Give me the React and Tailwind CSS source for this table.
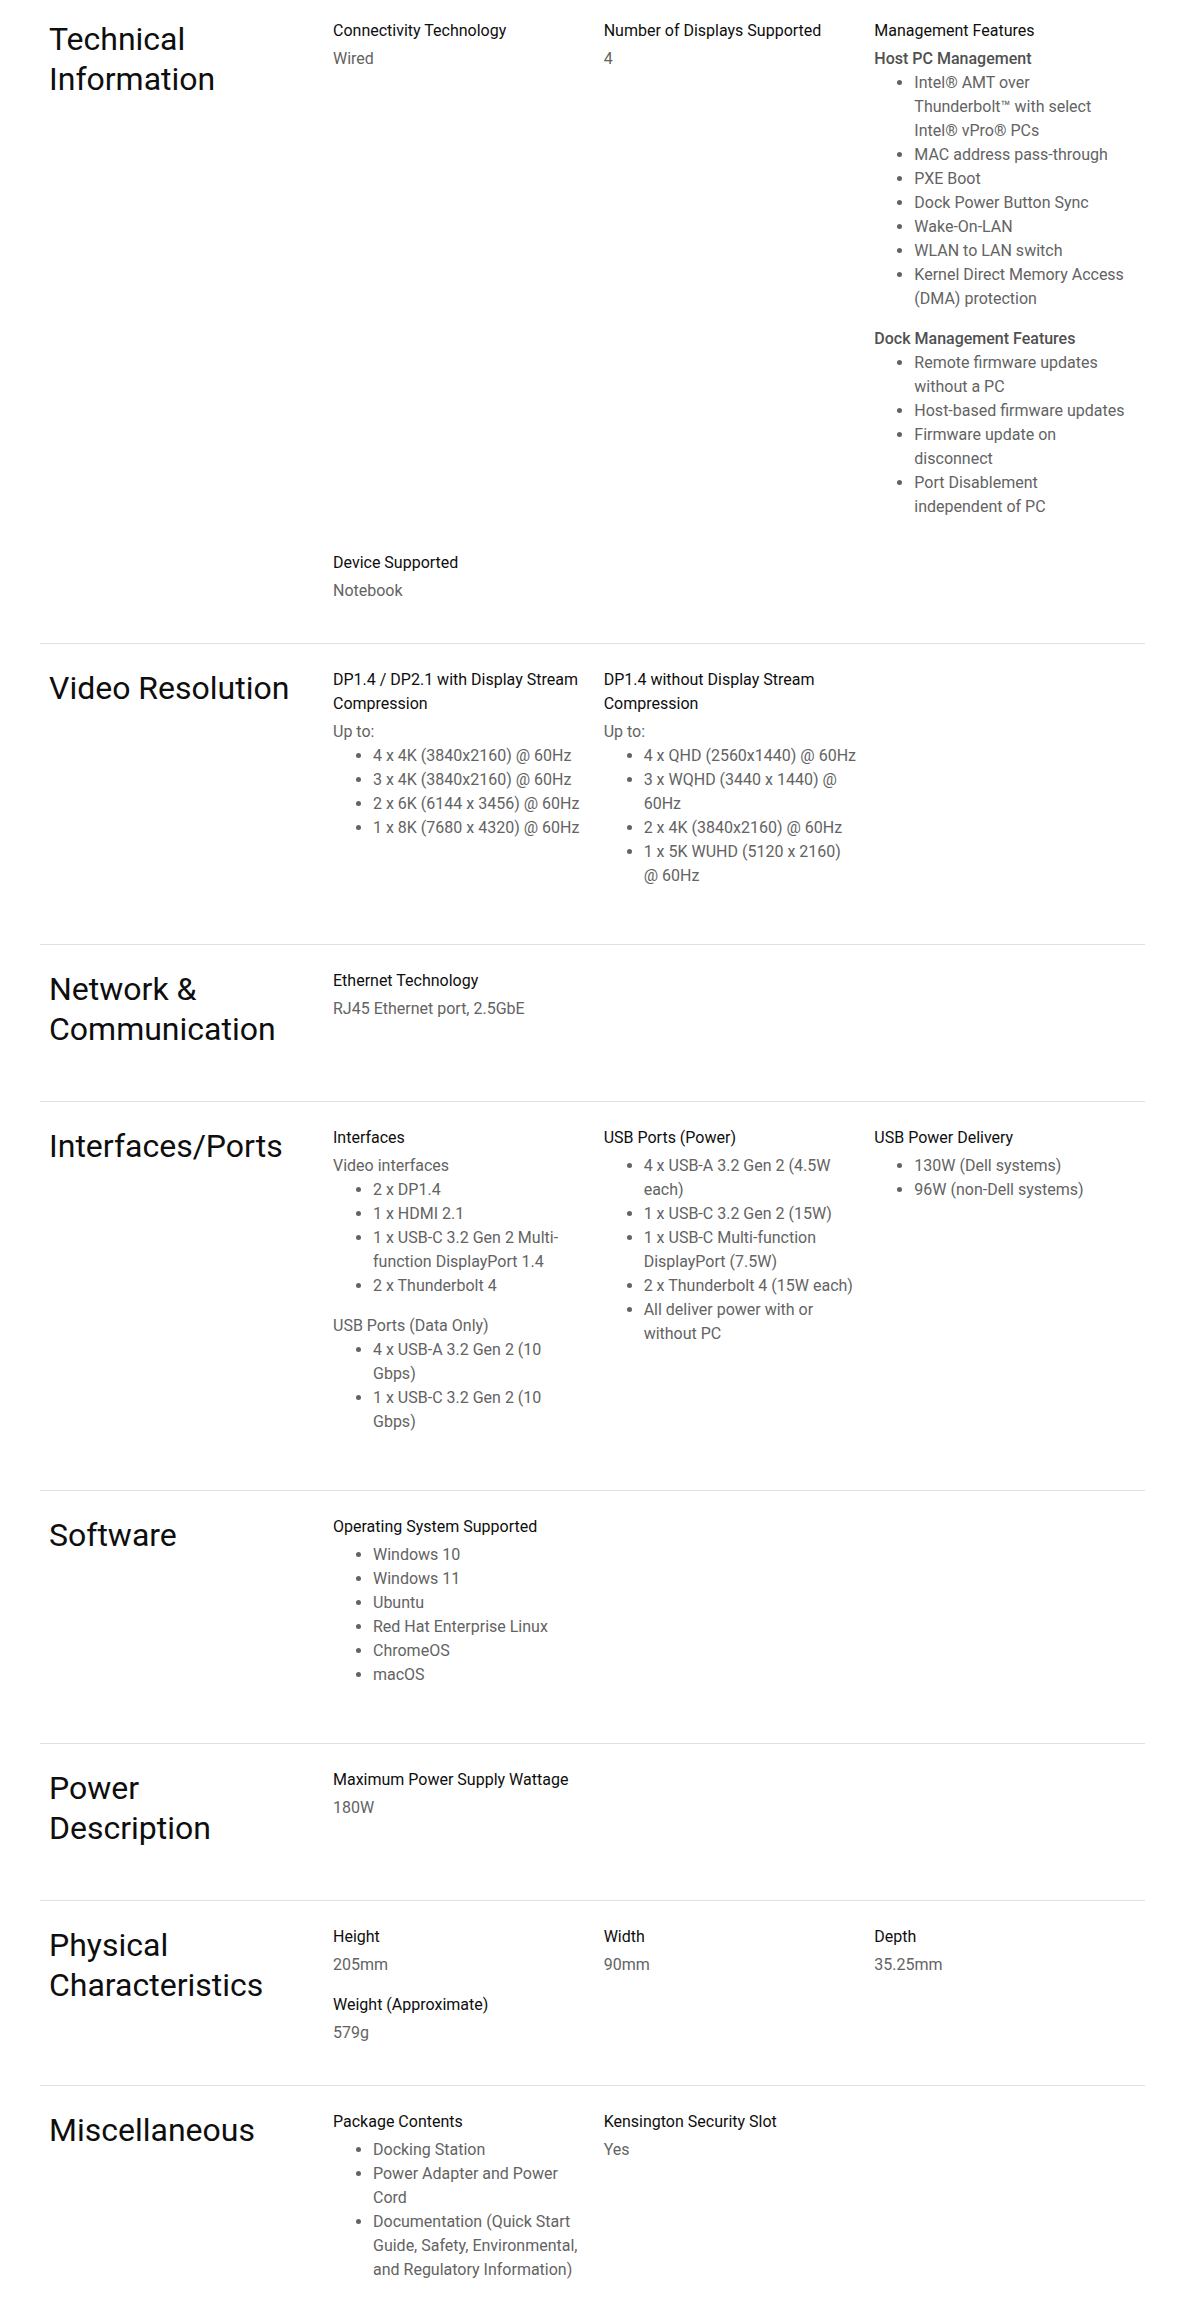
const sections = [
  {
    title: ["Technical", "Information"],
    items: [
      { label: "Connectivity Technology", body: [{ text: "Wired" }] },
      { label: "Number of Displays Supported", body: [{ text: "4" }] },
      {
        label: "Management Features",
        body: [
          { sub: "Host PC Management" },
          {
            list: [
              "Intel® AMT over Thunderbolt™ with select Intel® vPro® PCs",
              "MAC address pass-through",
              "PXE Boot",
              "Dock Power Button Sync",
              "Wake-On-LAN",
              "WLAN to LAN switch",
              "Kernel Direct Memory Access (DMA) protection",
            ],
          },
          { sub: "Dock Management Features" },
          {
            list: [
              "Remote firmware updates without a PC",
              "Host-based firmware updates",
              "Firmware update on disconnect",
              "Port Disablement independent of PC",
            ],
          },
        ],
      },
      { label: "Device Supported", body: [{ text: "Notebook" }] },
    ],
  },
  {
    title: ["Video Resolution"],
    items: [
      {
        label: "DP1.4 / DP2.1 with Display Stream Compression",
        body: [
          { text: "Up to:" },
          {
            list: [
              "4 x 4K (3840x2160) @ 60Hz",
              "3 x 4K (3840x2160) @ 60Hz",
              "2 x 6K (6144 x 3456) @ 60Hz",
              "1 x 8K (7680 x 4320) @ 60Hz",
            ],
          },
        ],
      },
      {
        label: "DP1.4 without Display Stream Compression",
        body: [
          { text: "Up to:" },
          {
            list: [
              "4 x QHD (2560x1440) @ 60Hz",
              "3 x WQHD (3440 x 1440) @ 60Hz",
              "2 x 4K (3840x2160) @ 60Hz",
              "1 x 5K WUHD (5120 x 2160) @ 60Hz",
            ],
          },
        ],
      },
    ],
  },
  {
    title: ["Network &", "Communication"],
    items: [
      { label: "Ethernet Technology", body: [{ text: "RJ45 Ethernet port, 2.5GbE" }] },
    ],
  },
  {
    title: ["Interfaces/Ports"],
    items: [
      {
        label: "Interfaces",
        body: [
          { text: "Video interfaces" },
          {
            list: [
              "2 x DP1.4",
              "1 x HDMI 2.1",
              "1 x USB-C 3.2 Gen 2 Multi-function DisplayPort 1.4",
              "2 x Thunderbolt 4",
            ],
          },
          { text: "USB Ports (Data Only)" },
          {
            list: ["4 x USB-A 3.2 Gen 2 (10 Gbps)", "1 x USB-C 3.2 Gen 2 (10 Gbps)"],
          },
        ],
      },
      {
        label: "USB Ports (Power)",
        body: [
          {
            list: [
              "4 x USB-A 3.2 Gen 2 (4.5W each)",
              "1 x USB-C 3.2 Gen 2 (15W)",
              "1 x USB-C Multi-function DisplayPort (7.5W)",
              "2 x Thunderbolt 4 (15W each)",
              "All deliver power with or without PC",
            ],
          },
        ],
      },
      {
        label: "USB Power Delivery",
        body: [{ list: ["130W (Dell systems)", "96W (non-Dell systems)"] }],
      },
    ],
  },
  {
    title: ["Software"],
    items: [
      {
        label: "Operating System Supported",
        body: [
          {
            list: [
              "Windows 10",
              "Windows 11",
              "Ubuntu",
              "Red Hat Enterprise Linux",
              "ChromeOS",
              "macOS",
            ],
          },
        ],
      },
    ],
  },
  {
    title: ["Power", "Description"],
    items: [{ label: "Maximum Power Supply Wattage", body: [{ text: "180W" }] }],
  },
  {
    title: ["Physical", "Characteristics"],
    items: [
      { label: "Height", body: [{ text: "205mm" }] },
      { label: "Width", body: [{ text: "90mm" }] },
      { label: "Depth", body: [{ text: "35.25mm" }] },
      { label: "Weight (Approximate)", body: [{ text: "579g" }] },
    ],
  },
  {
    title: ["Miscellaneous"],
    items: [
      {
        label: "Package Contents",
        body: [
          {
            list: [
              "Docking Station",
              "Power Adapter and Power Cord",
              "Documentation (Quick Start Guide, Safety, Environmental, and Regulatory Information)",
            ],
          },
        ],
      },
      { label: "Kensington Security Slot", body: [{ text: "Yes" }] },
    ],
  },
];

const Spec = ({ label, body }) => (
  <div>
    <h3 className="text-[16px] leading-6 text-[#0e0e0e]">{label}</h3>
    <div className="mt-1 text-[16px] leading-6 text-[#636363]">
      {body.map((b, i) => {
        if (b.sub) {
          return (
            <p key={i} className="font-medium text-[#505050]">
              {b.sub}
            </p>
          );
        }
        if (b.list) {
          return (
            <ul key={i} className="mb-4 list-disc pl-10">
              {b.list.map((li) => (
                <li key={li}>{li}</li>
              ))}
            </ul>
          );
        }
        return <p key={i}>{b.text}</p>;
      })}
    </div>
  </div>
);

const Section = ({ title, items, first }) => (
  <div
    className={`flex pb-10 ${first ? "pt-[19px]" : "border-t border-[#e0e0e0] pt-6"}`}
  >
    <div className="w-[293px] shrink-0 pl-[9px]">
      <h2 className="mb-3 text-[32px] leading-10 font-normal text-[#0e0e0e]">
        {title.map((t) => (
          <span key={t} className="block">
            {t}
          </span>
        ))}
      </h2>
    </div>
    <div className="grid w-[796px] grid-cols-3 content-start gap-x-4 gap-y-4">
      {items.map((it) => (
        <Spec key={it.label} {...it} />
      ))}
    </div>
  </div>
);

export default function App() {
  return (
    <div
      className="min-h-screen bg-white px-10"
      style={{ fontFamily: "Roboto, 'Liberation Sans', sans-serif" }}
    >
      {sections.map((s, i) => (
        <Section key={s.title.join(" ")} {...s} first={i === 0} />
      ))}
    </div>
  );
}
